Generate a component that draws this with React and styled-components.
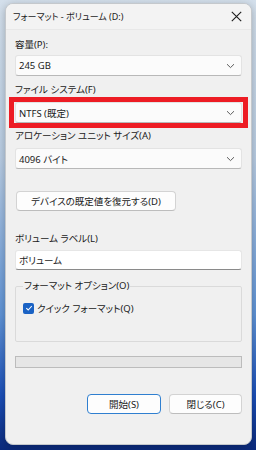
import styled, { createGlobalStyle } from "styled-components";

const GlobalStyle = createGlobalStyle`
  html, body {
    margin: 0;
    padding: 0;
  }
  body {
    font-family: "Noto Sans", "Noto Sans CJK JP", sans-serif;
    font-size: 9.5px;
    font-feature-settings: "palt";
    color: #1a1a1a;
  }
`;

//Desktop and window frame
const Desktop = styled.div`
  width: 256px;
  height: 450px;
  box-sizing: border-box;
  padding: 3px 4px 5px 5px;
  background: linear-gradient(
    180deg,
    #d4e0ec 0%,
    #b9cde3 35%,
    #5f93d6 70%,
    #1b4fb8 88%,
    #0b2a7c 100%
  );
`;

const Window = styled.div`
  height: 100%;
  box-sizing: border-box;
  background: #f0f0f0;
  border: 1px solid #c4c8cc;
  border-radius: 8px;
  box-shadow: 0 2px 8px rgba(0, 0, 0, 0.25);
  overflow: hidden;
  display: flex;
  flex-direction: column;
`;

const TitleBar = styled.div`
  height: 25px;
  display: flex;
  align-items: center;
  justify-content: space-between;
  padding: 0 8px 0 7px;
  background: #f3f3f3;
  border-bottom: 1px solid #e8e8e8;
  font-size: 9px;
  color: #1c1c1c;
`;

const CloseButton = styled.div`
  width: 14px;
  height: 14px;
  display: flex;
  align-items: center;
  justify-content: center;
`;

const Body = styled.div`
  padding: 8px 9px 0 9px;
  display: flex;
  flex-direction: column;
`;

const Label = styled.div`
  height: 14px;
  line-height: 14px;
  margin-top: ${(p) => p.$top || 0}px;
  white-space: nowrap;
`;

//Controls
const Combo = styled.div`
  height: 21px;
  box-sizing: border-box;
  margin-top: ${(p) => p.$top || 0}px;
  display: flex;
  align-items: center;
  justify-content: space-between;
  padding: 0 6px 0 3px;
  background: #fbfbfb;
  border: 1px solid #e3e3e3;
  border-bottom-color: #b8b8b8;
  border-radius: 3px;
`;

const Highlight = styled.div`
  margin: 0 -6px;
  padding: 0 1px;
  border: 5px solid #ed1c24;
`;

const Button = styled.div`
  height: 20px;
  width: ${(p) => p.$width}px;
  box-sizing: border-box;
  margin-top: ${(p) => p.$top || 0}px;
  margin-left: ${(p) => p.$left || 0}px;
  display: flex;
  align-items: center;
  justify-content: center;
  background: #fdfdfd;
  border: 1px solid ${(p) => (p.$primary ? "#2f7fd0" : "#d3d3d3")};
  border-bottom-color: ${(p) => (p.$primary ? "#2f7fd0" : "#bdbdbd")};
  border-radius: 4px;
  white-space: nowrap;
`;

const TextInput = styled.div`
  height: 20px;
  box-sizing: border-box;
  margin-top: 4px;
  display: flex;
  align-items: center;
  padding: 0 3px;
  background: #ffffff;
  border: 1px solid #e6e6e6;
  border-bottom-color: #8a8a8a;
  border-radius: 3px;
`;

const Group = styled.fieldset`
  margin: 9px 0 0 0;
  padding: 8px 7px 0 7px;
  height: 63px;
  box-sizing: border-box;
  border: 1px solid #dadada;
  border-radius: 2px;
  min-width: 0;
`;

const Legend = styled.legend`
  padding: 0 1px;
  margin-left: 0;
  line-height: 14px;
`;

const CheckRow = styled.div`
  display: flex;
  align-items: center;
  gap: 3px;
`;

const CheckBox = styled.div`
  width: 11px;
  height: 11px;
  border-radius: 2px;
  background: #1a62c4;
  display: flex;
  align-items: center;
  justify-content: center;
`;

const Progress = styled.div`
  height: 12px;
  box-sizing: border-box;
  margin-top: 14px;
  background: #e6e6e6;
  border: 1px solid #bcbcbc;
`;

const Footer = styled.div`
  margin-top: 26px;
  display: flex;
  justify-content: flex-end;
  gap: 8px;
`;

function Chevron() {
  return (
    <svg width="9" height="6" viewBox="0 0 9 6">
      <path d="M1 1.2 L4.5 4.6 L8 1.2" fill="none" stroke="#5c5c5c" strokeWidth="1" />
    </svg>
  );
}

function App() {
  return (
    <>
      <GlobalStyle />
      <Desktop>
        <Window>
          <TitleBar>
            <span>フォーマット - ボリューム (D:)</span>
            <CloseButton>
              <svg width="11" height="11" viewBox="0 0 11 11">
                <path d="M0.8 0.8 L10.2 10.2 M10.2 0.8 L0.8 10.2" stroke="#1c1c1c" strokeWidth="1.1" />
              </svg>
            </CloseButton>
          </TitleBar>
          <Body>
            <Label>容量(P):</Label>
            <Combo $top={3}>
              <span>245 GB</span>
              <Chevron />
            </Combo>
            <Label $top={7}>ファイル システム(F)</Label>
            <Highlight>
              <Combo>
                <span>NTFS (既定)</span>
                <Chevron />
              </Combo>
            </Highlight>
            <Label $top={1}>アロケーション ユニット サイズ(A)</Label>
            <Combo $top={5}>
              <span>4096 バイト</span>
              <Chevron />
            </Combo>
            <Button $width={160} $top={22} $left={1}>
              デバイスの既定値を復元する(D)
            </Button>
            <Label $top={21}>ボリューム ラベル(L)</Label>
            <TextInput>ボリューム</TextInput>
            <Group>
              <Legend>フォーマット オプション(O)</Legend>
              <CheckRow>
                <CheckBox>
                  <svg width="8" height="8" viewBox="0 0 8 8">
                    <path d="M1.3 4.2 L3.2 6 L6.8 2" fill="none" stroke="#fff" strokeWidth="1.1" />
                  </svg>
                </CheckBox>
                <span>クイック フォーマット(Q)</span>
              </CheckRow>
            </Group>
            <Progress />
            <Footer>
              <Button $width={74} $primary>開始(S)</Button>
              <Button $width={73}>閉じる(C)</Button>
            </Footer>
          </Body>
        </Window>
      </Desktop>
    </>
  );
}

export default App;
